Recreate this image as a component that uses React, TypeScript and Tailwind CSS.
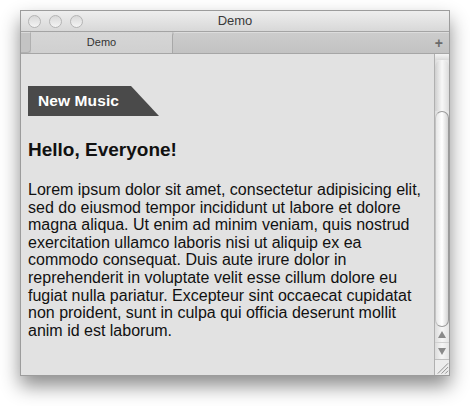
import React from 'react';

const lines = [
  'Lorem ipsum dolor sit amet, consectetur adipisicing elit,',
  'sed do eiusmod tempor incididunt ut labore et dolore',
  'magna aliqua. Ut enim ad minim veniam, quis nostrud',
  'exercitation ullamco laboris nisi ut aliquip ex ea',
  'commodo consequat. Duis aute irure dolor in',
  'reprehenderit in voluptate velit esse cillum dolore eu',
  'fugiat nulla pariatur. Excepteur sint occaecat cupidatat',
  'non proident, sunt in culpa qui officia deserunt mollit',
  'anim id est laborum.',
];

const Light = () => (
  <div className="w-[13px] h-[13px] rounded-full border border-[#b4b4b4] bg-gradient-to-b from-[#d8d8d8] to-[#f4f4f4]" />
);

const Scrollbar = () => (
  <div className="w-[15px] flex flex-col border-l border-[#b0b0b0] bg-gradient-to-r from-[#dcdcdc] via-[#f6f6f6] to-[#e4e4e4]">
    <div className="h-[6px] bg-gradient-to-b from-[#f4f4f4] to-[#dadada]" />
    {/* track groove */}
    <div className="h-[51px] rounded-t-full bg-gradient-to-r from-[#cfcfcf] via-[#f8f8f8] to-[#dcdcdc]" />
    {/* thumb */}
    <div className="h-[216px] rounded-full border border-[#9a9a9a] border-l-[#c4c4c4] bg-gradient-to-r from-[#e6e6e6] via-[#ffffff] to-[#d4d4d4]" />
    <div className="h-[16px] flex items-center justify-center border-b border-[#d0d0d0]">
      <svg width="8" height="7" viewBox="0 0 8 7">
        <path d="M4 0 L8 7 L0 7 Z" fill="#8a8a8a" />
      </svg>
    </div>
    <div className="h-[16px] flex items-center justify-center">
      <svg width="8" height="7" viewBox="0 0 8 7">
        <path d="M0 0 L8 0 L4 7 Z" fill="#8a8a8a" />
      </svg>
    </div>
    <div className="h-[16px] border-t border-[#c0c0c0] bg-[#ececec] flex items-end justify-end">
      <svg width="15" height="15" viewBox="0 0 15 15">
        <path d="M3 14 L14 3 M7 14 L14 7 M11 14 L14 11" stroke="#8c8c8c" strokeWidth="1" />
      </svg>
    </div>
  </div>
);

export default function App() {
  return (
    <div className="w-[470px] h-[406px] bg-white pt-[10px] pl-[20px]" style={{ fontFamily: '"Liberation Sans", Arial, sans-serif' }}>
      <div className="w-[430px] h-[366px] flex flex-col border border-[#9c9c9c] shadow-[0_10px_18px_rgba(0,0,0,0.45)]">
        {/* title bar */}
        <div className="relative h-[21px] flex items-center pl-[7px] gap-[8px] bg-gradient-to-b from-[#eeeeee] to-[#d8d8d8] border-b border-[#a4a4a4]">
          <Light />
          <Light />
          <Light />
          <span className="absolute left-0 right-0 text-center text-[13px] text-[#3a3a3a]">Demo</span>
        </div>
        {/* tab bar */}
        <div className="h-[22px] flex bg-[#c6c6c6] border-b border-[#a6a6a6]">
          <div className="w-[10px] bg-[#c4c4c4] rounded-br-[4px] border-r border-b border-[#b0b0b0] border-t border-t-[#dadada]" />
          <div className="w-[141px] flex items-center justify-center bg-gradient-to-b from-[#d6d6d6] to-[#d0d0d0] text-[11px] text-[#333]">
            Demo
          </div>
          <div className="flex-1 flex items-center justify-end pr-[6px] rounded-tl-[4px] border-l border-t border-[#a8a8a8] border-t-[#dcdcdc] bg-gradient-to-b from-[#cccccc] to-[#c2c2c2]">
            <span className="text-[14px] font-bold text-[#6a6a6a] leading-none">+</span>
          </div>
        </div>
        {/* content */}
        <div className="flex-1 flex min-h-0">
          <div className="flex-1 bg-[#e2e2e2] pl-[7px] pt-[32px] text-[#111]">
            <div className="w-[131px] h-[30px] bg-[#4a4a4a] flex items-center pl-[10px] [clip-path:polygon(0_0,103px_0,131px_100%,0_100%)]">
              <span className="text-white font-bold text-[15.5px] tracking-[0.1px]">New Music</span>
            </div>
            <h1 className="mt-[23px] text-[19px] leading-[22px] font-bold">Hello, Everyone!</h1>
            <p className="mt-[20px] text-[16px] leading-[17.6px]">
              {lines.map((l, i) => (
                <span key={i} className="block whitespace-nowrap">{l}</span>
              ))}
            </p>
          </div>
          <Scrollbar />
        </div>
      </div>
    </div>
  );
}
